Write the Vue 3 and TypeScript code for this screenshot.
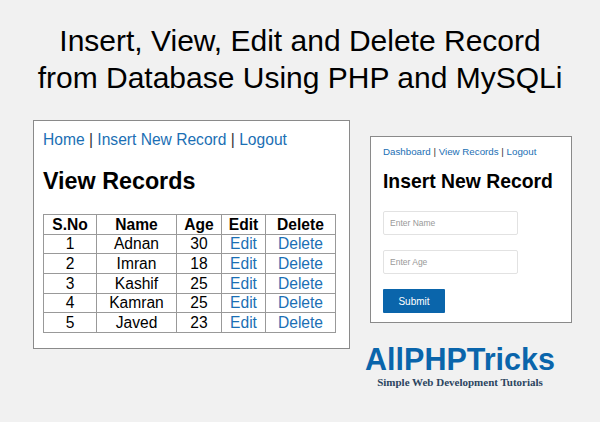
<script setup lang="ts">
const rows = [
  { id: 1, name: 'Adnan', age: 30 },
  { id: 2, name: 'Imran', age: 18 },
  { id: 3, name: 'Kashif', age: 25 },
  { id: 4, name: 'Kamran', age: 25 },
  { id: 5, name: 'Javed', age: 23 },
]
</script>

<template>
  <div class="page">
    <h1 class="title">Insert, View, Edit and Delete Record<br />from Database Using PHP and MySQLi</h1>
    <div class="content">
      <section class="card view">
        <p class="nav"><a>Home</a> | <a>Insert New Record</a> | <a>Logout</a></p>
        <h2 class="view-h">View Records</h2>
        <table>
          <colgroup>
            <col style="width: 53px" />
            <col style="width: 80px" />
            <col style="width: 45px" />
            <col style="width: 44px" />
            <col style="width: 70px" />
          </colgroup>
          <thead>
            <tr><th>S.No</th><th>Name</th><th>Age</th><th>Edit</th><th>Delete</th></tr>
          </thead>
          <tbody>
            <tr v-for="r in rows" :key="r.id">
              <td>{{ r.id }}</td>
              <td>{{ r.name }}</td>
              <td>{{ r.age }}</td>
              <td><a>Edit</a></td>
              <td><a>Delete</a></td>
            </tr>
          </tbody>
        </table>
      </section>
      <div class="side">
        <section class="card insert">
          <p class="nav small"><a>Dashboard</a> | <a>View Records</a> | <a>Logout</a></p>
          <h2 class="insert-h">Insert New Record</h2>
          <div class="input">Enter Name</div>
          <div class="input">Enter Age</div>
          <button class="submit" type="button">Submit</button>
        </section>
        <div class="logo">
          <div class="logo-main">AllPHPTricks</div>
          <div class="logo-sub">Simple Web Development Tutorials</div>
        </div>
      </div>
    </div>
  </div>
</template>

<style>
html, body { margin: 0; background: #f1f1f1; }
</style>

<style scoped>
.page {
  width: 600px;
  height: 422px;
  background: #f1f1f1;
  font-family: "Liberation Sans", Arial, sans-serif;
  color: #000;
  overflow: hidden;
  box-sizing: border-box;
  padding-top: 22px;
}
.title {
  margin: 0;
  font-size: 30px;
  line-height: 37px;
  font-weight: 400;
  text-align: center;
}
.content {
  display: flex;
  align-items: flex-start;
  gap: 20px;
  padding-left: 33px;
  margin-top: 24px;
}
.card {
  background: #fff;
  border: 1px solid #8a8a8a;
  box-sizing: border-box;
}
.view {
  width: 317px;
  height: 229px;
  padding: 9px 9px 0;
}
a { color: #1b6fb4; }
.nav {
  margin: 0;
  font-size: 15.6px;
  line-height: 20px;
  color: #333;
}
.view-h {
  margin: 17px 0 19px;
  font-size: 23.3px;
  line-height: 28px;
  font-weight: 700;
}
table {
  border-collapse: collapse;
  table-layout: fixed;
  width: 292px;
  font-size: 15.6px;
  text-align: center;
}
th, td {
  border: 1px solid #999;
  padding: 0;
  height: 18.67px;
  line-height: 17px;
}
th { font-weight: 700; }
.side {
  display: flex;
  flex-direction: column;
  padding-top: 16px;
}
.insert {
  width: 202px;
  height: 187px;
  padding: 9px 12px 0;
}
.nav.small {
  font-size: 9.75px;
  line-height: 12px;
}
.insert-h {
  margin: 11px 0 18px;
  font-size: 19.35px;
  line-height: 24px;
  font-weight: 700;
}
.input {
  width: 135px;
  height: 24px;
  box-sizing: border-box;
  border: 1px solid #e2e2e2;
  border-radius: 2px;
  padding-left: 6px;
  font-size: 8.5px;
  line-height: 22px;
  color: #999;
  margin-bottom: 15px;
}
.submit {
  display: block;
  width: 62px;
  height: 24px;
  margin-top: 0;
  padding: 0;
  border: none;
  border-radius: 1px;
  background: #0a65ab;
  color: #fff;
  font-family: inherit;
  font-size: 10px;
}
.logo {
  margin-top: 20px;
  margin-left: -5px;
  width: 190px;
  text-align: center;
}
.logo-main {
  font-size: 30.5px;
  line-height: 32px;
  font-weight: 700;
  color: #0a65ab;
}
.logo-sub {
  font-family: "Liberation Serif", "Times New Roman", serif;
  font-size: 11px;
  line-height: 12px;
  font-weight: 700;
  color: #2c4560;
  margin-top: 1px;
}
</style>
